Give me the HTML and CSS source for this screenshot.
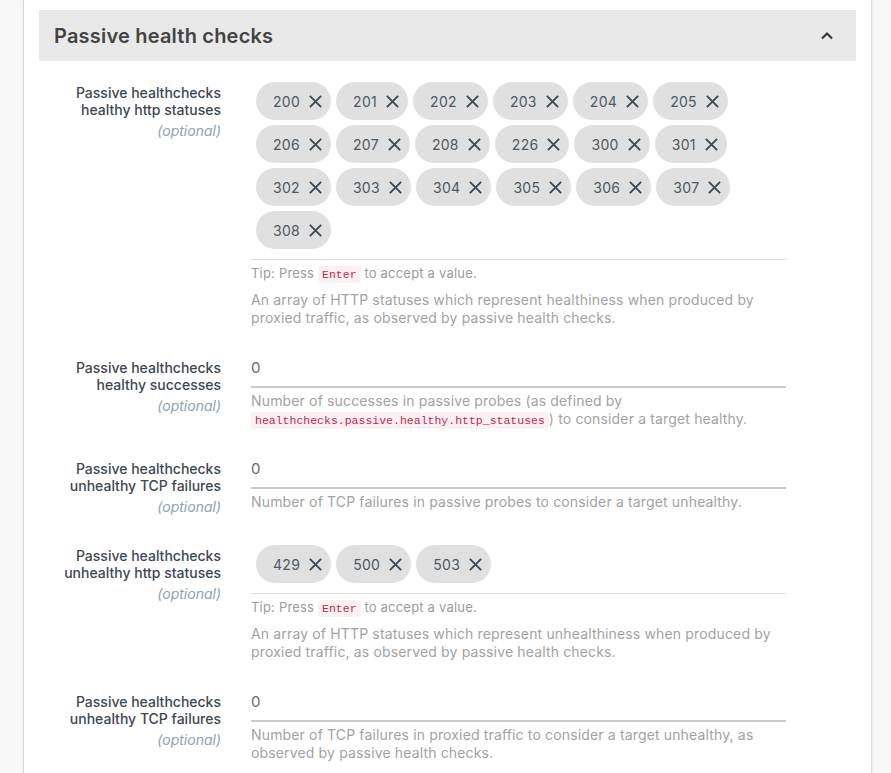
FILE: index.html
```html
<!DOCTYPE html>
<html>
<head>
<meta charset="utf-8">
<link rel="stylesheet" href="styles.css">
</head>
<body>
<div class="card">
  <div class="section-header">
    <h2 class="section-title">Passive health checks</h2>
    <svg class="chevron" width="14" height="9" viewBox="0 0 14 9"><path d="M2 7.5 L7 2.5 L12 7.5" fill="none" stroke="#3a3a3a" stroke-width="2.2"/></svg>
  </div>

  <div class="form">
    <div class="row">
      <div class="label">
        <div>Passive healthchecks<br>healthy http statuses</div>
        <div class="optional">(optional)</div>
      </div>
      <div class="field">
        <div class="chips">
          <span class="chip">200<svg class="x" viewBox="0 0 16 16"><path d="M2 2 L14 14 M14 2 L2 14"/></svg></span>
          <span class="chip">201<svg class="x" viewBox="0 0 16 16"><path d="M2 2 L14 14 M14 2 L2 14"/></svg></span>
          <span class="chip">202<svg class="x" viewBox="0 0 16 16"><path d="M2 2 L14 14 M14 2 L2 14"/></svg></span>
          <span class="chip">203<svg class="x" viewBox="0 0 16 16"><path d="M2 2 L14 14 M14 2 L2 14"/></svg></span>
          <span class="chip">204<svg class="x" viewBox="0 0 16 16"><path d="M2 2 L14 14 M14 2 L2 14"/></svg></span>
          <span class="chip">205<svg class="x" viewBox="0 0 16 16"><path d="M2 2 L14 14 M14 2 L2 14"/></svg></span>
          <span class="break"></span>
          <span class="chip">206<svg class="x" viewBox="0 0 16 16"><path d="M2 2 L14 14 M14 2 L2 14"/></svg></span>
          <span class="chip">207<svg class="x" viewBox="0 0 16 16"><path d="M2 2 L14 14 M14 2 L2 14"/></svg></span>
          <span class="chip">208<svg class="x" viewBox="0 0 16 16"><path d="M2 2 L14 14 M14 2 L2 14"/></svg></span>
          <span class="chip">226<svg class="x" viewBox="0 0 16 16"><path d="M2 2 L14 14 M14 2 L2 14"/></svg></span>
          <span class="chip">300<svg class="x" viewBox="0 0 16 16"><path d="M2 2 L14 14 M14 2 L2 14"/></svg></span>
          <span class="chip">301<svg class="x" viewBox="0 0 16 16"><path d="M2 2 L14 14 M14 2 L2 14"/></svg></span>
          <span class="break"></span>
          <span class="chip">302<svg class="x" viewBox="0 0 16 16"><path d="M2 2 L14 14 M14 2 L2 14"/></svg></span>
          <span class="chip">303<svg class="x" viewBox="0 0 16 16"><path d="M2 2 L14 14 M14 2 L2 14"/></svg></span>
          <span class="chip">304<svg class="x" viewBox="0 0 16 16"><path d="M2 2 L14 14 M14 2 L2 14"/></svg></span>
          <span class="chip">305<svg class="x" viewBox="0 0 16 16"><path d="M2 2 L14 14 M14 2 L2 14"/></svg></span>
          <span class="chip">306<svg class="x" viewBox="0 0 16 16"><path d="M2 2 L14 14 M14 2 L2 14"/></svg></span>
          <span class="chip">307<svg class="x" viewBox="0 0 16 16"><path d="M2 2 L14 14 M14 2 L2 14"/></svg></span>
          <span class="break"></span>
          <span class="chip">308<svg class="x" viewBox="0 0 16 16"><path d="M2 2 L14 14 M14 2 L2 14"/></svg></span>
        </div>
        <div class="tip">Tip: Press <code>Enter</code> to accept a value.</div>
        <div class="desc">An array of HTTP statuses which represent healthiness when produced by proxied traffic, as observed by passive health checks.</div>
      </div>
    </div>

    <div class="row">
      <div class="label">
        <div>Passive healthchecks<br>healthy successes</div>
        <div class="optional">(optional)</div>
      </div>
      <div class="field">
        <div class="input">0</div>
        <div class="desc desc-input">Number of successes in passive probes (as defined by <code>healthchecks.passive.healthy.http_statuses</code>) to consider a target healthy.</div>
      </div>
    </div>

    <div class="row">
      <div class="label">
        <div>Passive healthchecks<br>unhealthy TCP failures</div>
        <div class="optional">(optional)</div>
      </div>
      <div class="field">
        <div class="input">0</div>
        <div class="desc desc-input">Number of TCP failures in passive probes to consider a target unhealthy.</div>
      </div>
    </div>

    <div class="row">
      <div class="label">
        <div>Passive healthchecks<br>unhealthy http statuses</div>
        <div class="optional">(optional)</div>
      </div>
      <div class="field">
        <div class="chips">
          <span class="chip">429<svg class="x" viewBox="0 0 16 16"><path d="M2 2 L14 14 M14 2 L2 14"/></svg></span>
          <span class="chip">500<svg class="x" viewBox="0 0 16 16"><path d="M2 2 L14 14 M14 2 L2 14"/></svg></span>
          <span class="chip">503<svg class="x" viewBox="0 0 16 16"><path d="M2 2 L14 14 M14 2 L2 14"/></svg></span>
        </div>
        <div class="tip">Tip: Press <code>Enter</code> to accept a value.</div>
        <div class="desc">An array of HTTP statuses which represent unhealthiness when produced by proxied traffic, as observed by passive health checks.</div>
      </div>
    </div>

    <div class="row">
      <div class="label">
        <div>Passive healthchecks<br>unhealthy TCP failures</div>
        <div class="optional">(optional)</div>
      </div>
      <div class="field">
        <div class="input">0</div>
        <div class="desc desc-input">Number of TCP failures in proxied traffic to consider a target unhealthy, as observed by passive health checks.</div>
      </div>
    </div>
  </div>
</div>
</body>
</html>
```

FILE: styles.css
```css
html, body {
  margin: 0;
  padding: 0;
  background: #f8f8f8;
  font-family: Inter, "Open Sans", sans-serif;
}

.card {
  margin-left: 23px;
  width: 849px;
  box-sizing: border-box;
  background: #ffffff;
  border: 1px solid #d9d9d9;
  border-top: none;
  box-shadow: 0 0 3px rgba(0, 0, 0, 0.08);
  padding: 10px 15px 40px;
}

.section-header {
  height: 51px;
  background: #e9e9e9;
  display: flex;
  align-items: center;
  justify-content: space-between;
  padding: 0 22px 0 15px;
}

.section-title {
  margin: 0;
  font-size: 20px;
  font-weight: 600;
  color: #444444;
  letter-spacing: 0.2px;
  line-height: 24px;
}

.chevron {
  display: block;
}

.form {
  margin-top: 21px;
}

.row {
  display: grid;
  grid-template-columns: 182px 535px;
  column-gap: 30px;
  margin-bottom: 30px;
}

.label {
  padding-top: 2px;
  text-align: right;
  font-size: 14px;
  line-height: 17px;
  font-weight: 500;
  color: #3d4851;
}

.optional {
  margin-top: 4px;
  font-style: italic;
  font-weight: 400;
  color: #8fa2ae;
}

.chips {
  display: flex;
  flex-wrap: wrap;
  padding: 0 0 5px 5px;
  border-bottom: 1px solid #dedede;
}

.chip {
  display: inline-flex;
  align-items: center;
  height: 38px;
  box-sizing: border-box;
  padding: 0 8px 0 17px;
  margin: 0 5px 5px 0;
  border-radius: 19px;
  background: #e0e0e0;
  color: #4b5a65;
  font-size: 14px;
  letter-spacing: 0.3px;
}

.x {
  width: 15px;
  height: 15px;
  margin-left: 8px;
  fill: none;
  stroke: #3e4a54;
  stroke-width: 2;
}

.break {
  flex-basis: 100%;
  height: 0;
}

.tip {
  margin-top: 4px;
  font-size: 13px;
  line-height: 18px;
  color: #9c9c9c;
  letter-spacing: 0.2px;
}

code {
  font-family: "Liberation Mono", monospace;
  font-size: 11.5px;
  line-height: 1;
  letter-spacing: 0;
  color: #c7254e;
  background: #fbf1f3;
  border-radius: 3px;
  padding: 2px 4px;
}

.desc {
  margin-top: 9px;
  font-size: 14px;
  line-height: 18px;
  color: #a2a2a2;
  letter-spacing: 0.15px;
}

.desc-input {
  margin-top: 4px;
}

.input {
  font-size: 15px;
  line-height: 22px;
  color: #6a6a6a;
  padding: 0 0 7px 0;
  border-bottom: 2px solid #c9c9c9;
}
```
